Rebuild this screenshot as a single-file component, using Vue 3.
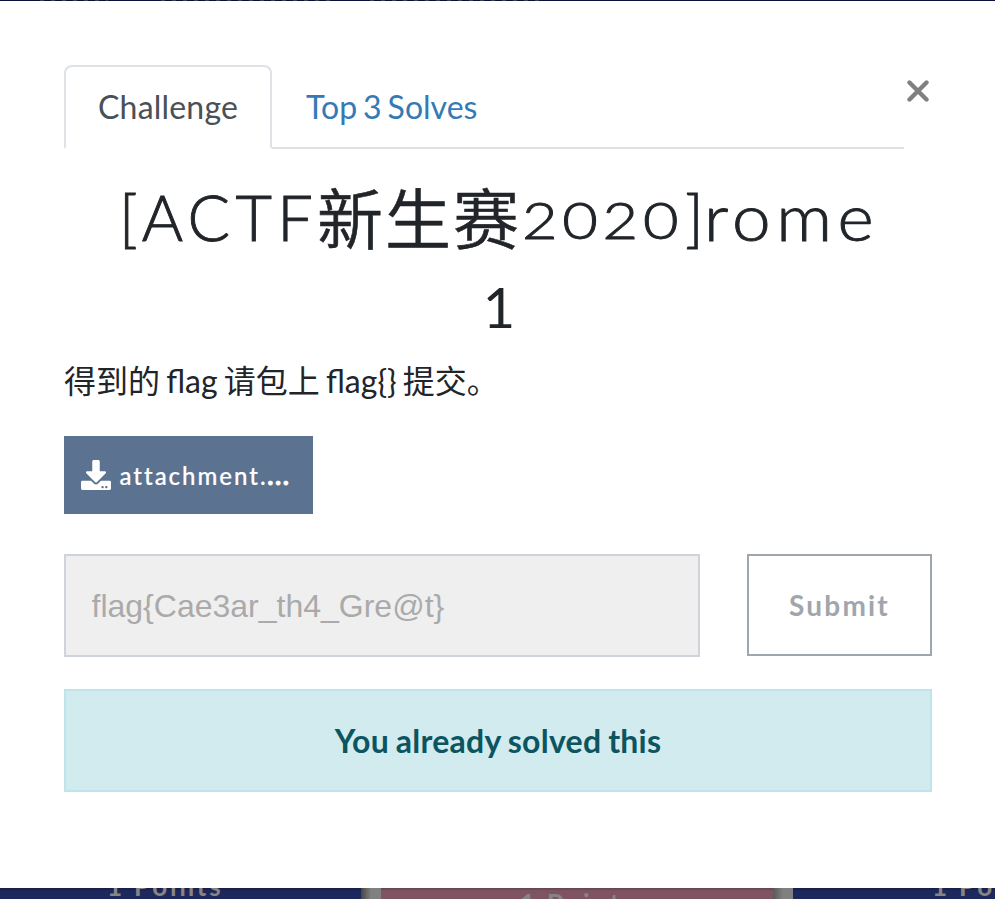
<script setup>
import { ref } from 'vue'

const tabs = ['Challenge', 'Top 3 Solves']
const active = ref(0)
const submission = ref('flag{Cae3ar_th4_Gre@t}')
</script>

<template>
  <div class="page">
    <div class="backdrop-top"></div>
    <main class="modal">
      <header class="head">
        <nav class="tabs">
          <a v-for="(tab, i) in tabs" :key="tab" class="tab" :class="{ active: active === i }" @click="active = i">{{ tab }}</a>
        </nav>
        <button class="close" aria-label="Close">
          <svg viewBox="0 0 22 22" width="22" height="22"><path d="M2.500 2.500L19.500 19.500M19.500 2.500L2.500 19.500" /></svg>
        </button>
      </header>
      <h2 class="title">
        <span class="line"><span class="caps">[ACTF</span><span class="cjk">新生赛</span><span class="digits"><span>2020</span></span><span class="bracket">]</span><span class="lower">rome</span></span>
        <span class="value">1</span>
      </h2>
      <p class="desc">得到的 flag 请包上 flag{} 提交。</p>
      <a class="download">
        <svg viewBox="0 0 512 512" width="30" height="30"><path fill="#fff" d="M216 0h80c13.3 0 24 10.7 24 24v168h87.700c17.800 0 26.700 21.500 14.100 34.100L269.700 378.300c-7.500 7.500-19.800 7.500-27.300 0L90.100 226.100c-12.600-12.600-3.700-34.100 14.100-34.100H192V24c0-13.300 10.700-24 24-24zm296 376v112c0 13.300-10.700 24-24 24H24c-13.300 0-24-10.700-24-24V376c0-13.300 10.700-24 24-24h146.700l49 49c20.100 20.100 52.500 20.100 72.600 0l49-49H488c13.300 0 24 10.700 24 24zm-124 88c0-11-9-20-20-20s-20 9-20 20 9 20 20 20 20-9 20-20zm64 0c0-11-9-20-20-20s-20 9-20 20 9 20 20 20 20-9 20-20z" /></svg>
        <span class="file">attachment.<b>...</b></span>
      </a>
      <form class="form" @submit.prevent>
        <input v-model="submission" class="answer" disabled />
        <button class="submit" disabled>Submit</button>
      </form>
      <div class="alert">You already solved this</div>
    </main>
    <footer class="board">
      <div class="card left"><span>1 Points</span></div>
      <div class="gap"></div>
      <div class="card rose"><span>1 Points</span></div>
      <div class="gap second"></div>
      <div class="card right"><span>1 Points</span></div>
    </footer>
  </div>
</template>

<style>
body { margin: 0; background: #fff; overflow: hidden; }
</style>

<style scoped>
* { box-sizing: border-box; }
.page { width: 995px; height: 899px; display: flex; flex-direction: column; overflow: hidden; font-family: Lato, "Noto Sans CJK SC", sans-serif; font-size: 32px; line-height: 48px; color: #212529; }
.backdrop-top { height: 1px; background: linear-gradient(90deg, #07113a 35px, transparent 35px 108px, #07113a 108px 155px, transparent 155px 330px, #07113a 330px 370px, transparent 370px 545px, #07113a 545px), repeating-linear-gradient(90deg, #07113a 0 7px, #3d3d52 7px 11px); }
.modal { height: 887px; padding: 64px 63px 0 64px; background: #fff; display: flex; flex-direction: column; }
.head { display: flex; height: 84px; }
.tabs { display: flex; width: 840px; border-bottom: 2px solid #dee2e6; }
.tab { height: 84px; padding: 16px 32px; border: 2px solid transparent; color: #337ab7; white-space: nowrap; cursor: pointer; word-spacing: -2.2px; }
.tab.active { width: 208px; letter-spacing: .2px; color: #495057; background: #fff; border-color: #dee2e6 #dee2e6 #fff; border-radius: 8px 8px 0 0; }
.close { width: 28px; height: 52px; padding: 0 0 0 3px; border: 0; background: none; display: flex; align-items: center; }
.close path { fill: none; stroke: #808080; stroke-width: 4.400; stroke-linecap: round; }
.title { margin: 22px 0 0; height: 186px; font-weight: 400; display: flex; flex-direction: column; align-items: center; }
.line { display: flex; height: 92px; line-height: 92px; width: 756px; white-space: nowrap; font-size: 63px; font-weight: 300; -webkit-text-stroke: .9px #212529; }
.caps { width: 198px; letter-spacing: 5.4px; margin-left: -1px; }
.cjk { width: 205px; font-size: 66px; line-height: 88px; font-weight: 350; letter-spacing: 2px; -webkit-text-stroke: .6px #212529; font-family: "Noto Sans CJK SC", sans-serif; }
.digits { width: 163px; font-size: 52px; line-height: 96px; letter-spacing: 4px; }
.digits span { display: inline-block; transform: scaleX(1.18); transform-origin: 0 50%; }
.bracket { width: 19px; }
.lower { letter-spacing: 5px; display: inline-block; transform: scaleX(1.1); transform-origin: 0 50%; }
.value { font-size: 56px; height: 88px; line-height: 88px; padding-left: 2px; }
.desc { margin: 0; height: 48px; white-space: nowrap; word-spacing: -2px; }
.download { margin-top: 31px; width: 249px; height: 78px; padding-left: 17px; display: flex; align-items: center; gap: 8px; background: #5b7290; color: #fff; }
.file { font-size: 24px; letter-spacing: 1.98px; font-weight: 500; padding: 2px 0 0 .5px; -webkit-text-stroke: .2px #fff; }
.file b { font-weight: 900; -webkit-text-stroke: .8px #fff; }
.form { display: flex; margin: 40px 0 0; align-items: flex-start; justify-content: space-between; }
.answer { width: 636px; height: 103px; padding: 2px 26px 0 25.5px; border: 2px solid #ced4da; background: #efefef; color: #aaa; font: 32px "Liberation Sans", sans-serif; border-radius: 0; }
.submit { width: 185px; height: 102px; padding: 0; border: 2px solid #a0a6ad; background: #fff; color: #a0a6ad; font: 700 28px Lato, sans-serif; letter-spacing: 2.2px; }
.alert { margin-top: 32px; height: 103px; border: 2px solid #bee5eb; background: #d1ebef; color: #0c5460; font-weight: 700; word-spacing: -1.200px; letter-spacing: .26px; line-height: 99px; text-align: center; }
.board { height: 11px; display: flex; overflow: hidden; font-size: 26px; font-weight: 700; letter-spacing: 2.8px; line-height: 30px; color: #858585; white-space: nowrap; }
.card { height: 11px; background: linear-gradient(#171d45, #1d285c 3px); overflow: hidden; display: flex; align-items: flex-start; }
.card span { margin-top: -17px; }
.left { width: 361px; padding-left: 107px; }
.rose { width: 392px; padding-left: 139px; background: linear-gradient(#624450, #7e5463 3px); }
.rose span { margin-top: 0; }
.right { width: 202px; padding-left: 139px; }
.gap { width: 20px; background: linear-gradient(90deg, #444, #808080 10px); }
.gap.second { background: linear-gradient(90deg, #555b55, #808080 10px); }
</style>
